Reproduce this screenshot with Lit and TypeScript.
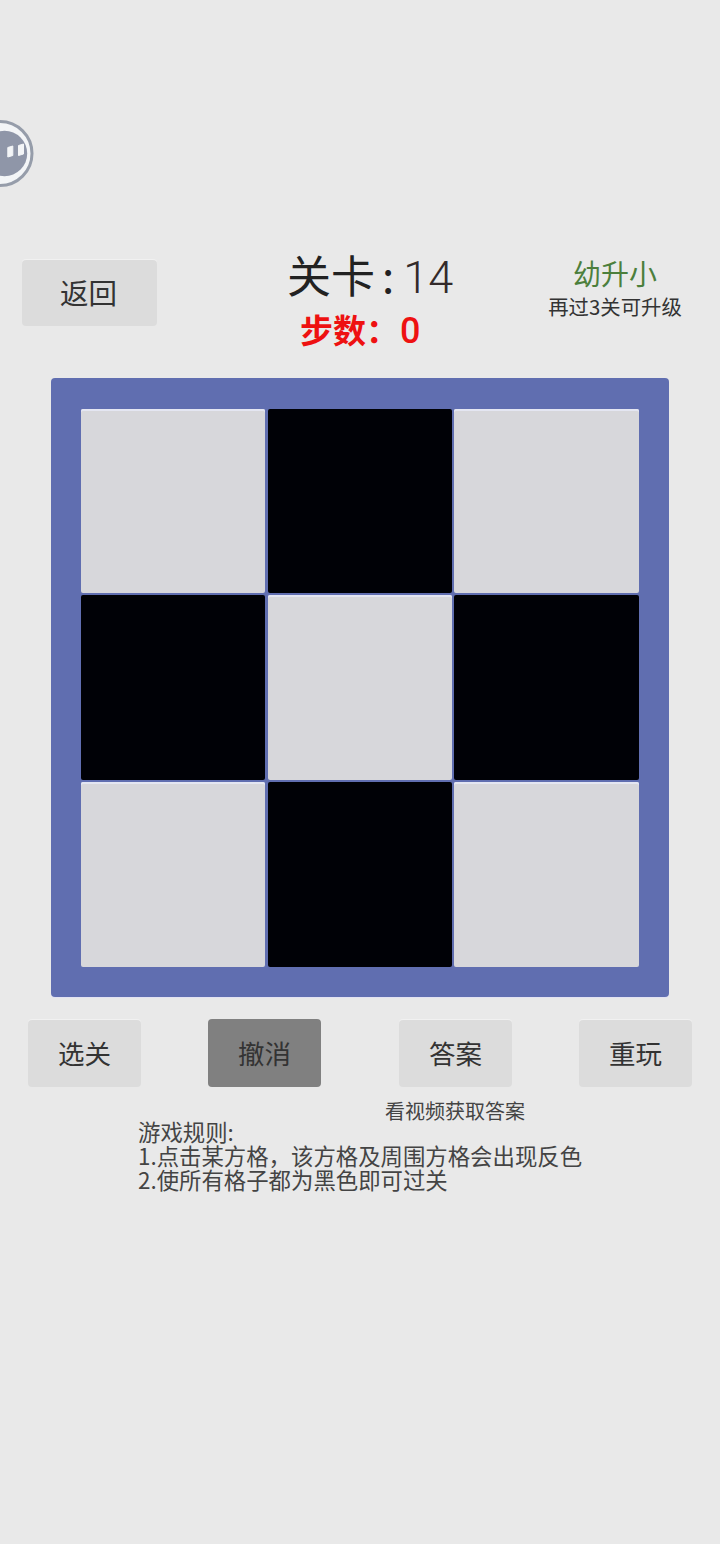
import { LitElement, html, css } from "lit";
import { customElement } from "lit/decorators.js";

const CELLS = [0, 1, 0, 1, 0, 1, 0, 1, 0];

@customElement("app-root")
export class AppRoot extends LitElement {
  static styles = css`
    :host {
      display: block;
      position: relative;
      width: 720px;
      height: 1544px;
      overflow: hidden;
      background: #e9e9e9;
      font-family: "Noto Sans CJK SC", "Roboto", sans-serif;
      color: #2e2e2e;
    }
    .float {
      position: absolute;
      left: -34px;
      top: 120px;
      width: 68px;
      height: 68px;
    }
    .page {
      display: flex;
      flex-direction: column;
      padding-top: 246px;
    }
    .header {
      display: grid;
      grid-template-columns: 135px 1fr 134px;
      height: 132px;
      padding: 0 38px 0 22px;
    }
    .btn {
      display: flex;
      align-items: center;
      justify-content: center;
      box-sizing: border-box;
      padding-bottom: 2px;
      background: #dcdcdc;
      border-radius: 4px;
      box-shadow: 0 -1px 0 #f1f1f1;
      color: #333;
      font-size: 28.500px;
      line-height: 1;
    }
    .back {
      width: 135px;
      height: 66px;
      margin-top: 14px;
      padding-right: 2px;
    }
    .center {
      display: flex;
      flex-direction: column;
      align-items: flex-start;
    }
    .title {
      display: flex;
      align-items: baseline;
      margin-left: 130px;
      height: 57px;
      font-size: 44px;
      line-height: 57px;
      color: #222;
      white-space: pre;
    }
    .title .colon {
      margin-left: 7px;
    }
    .title .num {
      margin-left: 9px;
      font-family: "Roboto", sans-serif;
      font-size: 45px;
      font-weight: 300;
      color: #332a2a;
    }
    .steps {
      margin-left: 143px;
      font-size: 33px;
      line-height: 52px;
      font-weight: 700;
      color: #ee1111;
      white-space: pre;
    }
    .steps .num {
      margin-left: 1px;
      font-family: "Roboto", sans-serif;
      font-weight: 500;
      font-size: 36px;
    }
    .rank {
      display: flex;
      flex-direction: column;
      align-items: center;
      padding-top: 10px;
    }
    .rank-name {
      font-size: 28px;
      line-height: 34px;
      color: #4c7f3c;
      white-space: nowrap;
    }
    .rank-hint {
      font-size: 20.400px;
      line-height: 32px;
      color: #333;
      white-space: nowrap;
    }
    .board {
      box-sizing: border-box;
      width: 618px;
      height: 619px;
      margin-left: 51px;
      padding: 31px 30px 30px;
      border-radius: 4px;
      background: #606eb0;
      box-shadow: 0 1px 0 #e2e2f2;
      display: grid;
      grid-template-columns: 184.400px 184.400px 184.600px;
      grid-template-rows: 184.400px 185px 184.600px;
      column-gap: 2.200px;
      row-gap: 2px;
    }
    .cell {
      border-radius: 2px;
    }
    .cell.light {
      background: #d7d7db;
      box-shadow: inset 0 2px 0 #e4e6f2;
    }
    .cell.dark {
      background: #000106;
    }
    .actions {
      display: flex;
      margin-top: 23px;
      padding-left: 28px;
    }
    .actions .btn {
      width: 113px;
      height: 67px;
      padding-bottom: 0;
      font-size: 26.500px;
    }
    .actions .undo {
      height: 68px;
      margin-top: -1px;
      margin-left: 67px;
      background: #808080;
      box-shadow: none;
    }
    .actions .answer {
      margin-left: 78px;
    }
    .actions .replay {
      margin-left: 67px;
    }
    .video {
      margin: 16px 0 0 385px;
      font-size: 20px;
      line-height: 16px;
      color: #444;
      white-space: nowrap;
    }
    .rules {
      margin: 0 0 0 138px;
      font-size: 22.400px;
      line-height: 24px;
      color: #444;
      white-space: nowrap;
    }
    .rules div {
      height: 24px;
    }
  `;

  render() {
    return html`
      <svg class="float" viewBox="0 0 68 68" aria-hidden="true">
        <circle cx="34" cy="33.500" r="32" fill="#f3f5f7" stroke="#969daa" stroke-width="3"></circle>
        <circle cx="38.500" cy="33.500" r="22.700" fill="#8f96a8"></circle>
        <path d="M41.800 27.500 L46.800 26 V35.500 L41.800 37 Z" fill="#f3f5f7" stroke="#f3f5f7" stroke-linejoin="round"></path>
        <path d="M52.500 25.500 L57.500 24 V34 L52.500 35.500 Z" fill="#f3f5f7" stroke="#f3f5f7" stroke-linejoin="round"></path>
      </svg>
      <div class="page">
        <div class="header">
          <div class="btn back">返回</div>
          <div class="center">
            <div class="title"><span>关卡</span><span class="colon">:</span><span class="num">14</span></div>
            <div class="steps">步数：<span class="num">0</span></div>
          </div>
          <div class="rank">
            <div class="rank-name">幼升小</div>
            <div class="rank-hint">再过3关可升级</div>
          </div>
        </div>
        <div class="board">
          ${CELLS.map((c) => html`<div class="cell ${c ? "dark" : "light"}"></div>`)}
        </div>
        <div class="actions">
          <div class="btn">选关</div>
          <div class="btn undo">撤消</div>
          <div class="btn answer">答案</div>
          <div class="btn replay">重玩</div>
        </div>
        <div class="video">看视频获取答案</div>
        <div class="rules">
          <div>游戏规则:</div>
          <div>1.点击某方格，该方格及周围方格会出现反色</div>
          <div>2.使所有格子都为黑色即可过关</div>
        </div>
      </div>
    `;
  }
}
